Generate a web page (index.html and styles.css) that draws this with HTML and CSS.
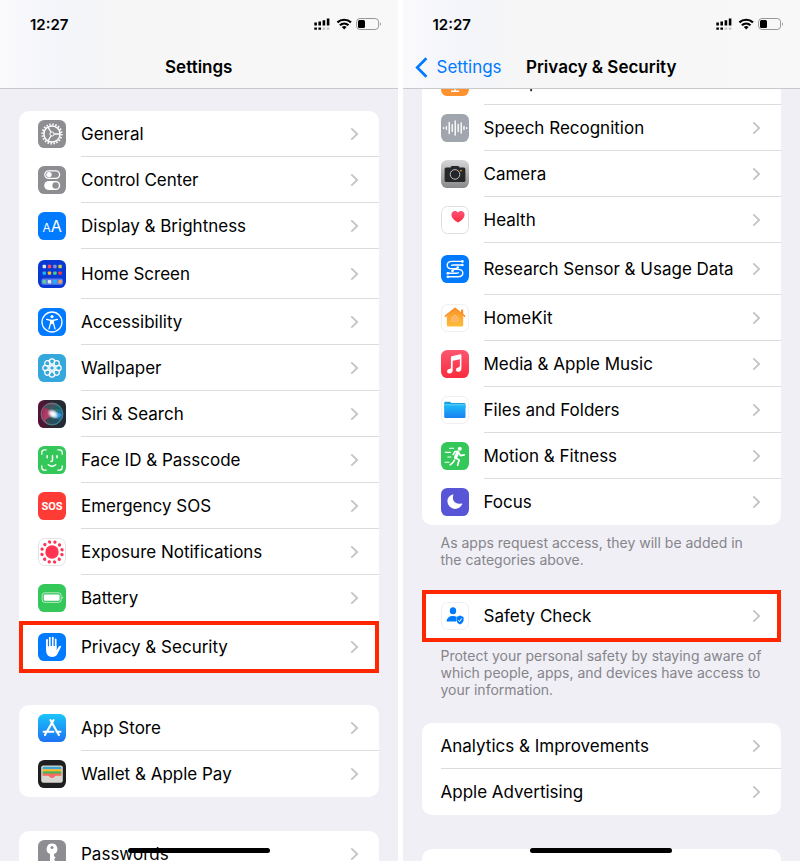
FILE: index.html
```html
<!DOCTYPE html>
<html lang="en">

<head>
    <meta charset="UTF-8">
    <meta name="viewport" content="width=device-width, initial-scale=1.0">
    <title>Settings - Privacy &amp; Security</title>
    <link rel="stylesheet" href="styles.css">
</head>

<body>
    <!-- Shared shapes -->
    <svg class="defs" width="0" height="0" aria-hidden="true">
        <defs>
            <linearGradient id="store-bg" x1="0" y1="0" x2="0" y2="1">
                <stop offset="0" stop-color="#1ac4fb"/><stop offset="1" stop-color="#1d72f2"/>
            </linearGradient>
            <linearGradient id="camera-bg" x1="0" y1="0" x2="0" y2="1">
                <stop offset="0" stop-color="#d6d6d8"/><stop offset="1" stop-color="#88888b"/>
            </linearGradient>
            <linearGradient id="music-bg" x1="0" y1="0" x2="0" y2="1">
                <stop offset="0" stop-color="#fb5770"/><stop offset="1" stop-color="#fa2b3c"/>
            </linearGradient>
            <linearGradient id="folder-bg" x1="0" y1="0" x2="0" y2="1">
                <stop offset="0" stop-color="#1fb9fb"/><stop offset="1" stop-color="#1a80f1"/>
            </linearGradient>
            <linearGradient id="heart-bg" x1="0" y1="0" x2="0" y2="1">
                <stop offset="0" stop-color="#fd5279"/><stop offset="1" stop-color="#fb2c3f"/>
            </linearGradient>
            <linearGradient id="home-bg" x1="0" y1="0" x2="0" y2="1">
                <stop offset="0" stop-color="#fb9426"/><stop offset="1" stop-color="#fdbc3c"/>
            </linearGradient>
            <linearGradient id="siri-bg" x1="0" y1="0" x2="1" y2="0">
                <stop offset="0" stop-color="#5c0f33"/><stop offset=".5" stop-color="#2a2832"/><stop offset="1" stop-color="#1f2a33"/>
            </linearGradient>
            <linearGradient id="siri-orb" x1="0" y1=".3" x2="1" y2=".7">
                <stop offset="0" stop-color="#b02c5c"/><stop offset=".4" stop-color="#d0507c"/><stop offset=".6" stop-color="#2b8b93"/><stop offset="1" stop-color="#1c78b8"/>
            </linearGradient>
            <radialGradient id="siri-glow">
                <stop offset="0" stop-color="#fff"/><stop offset=".4" stop-color="#fff" stop-opacity=".85"/><stop offset="1" stop-color="#fff" stop-opacity="0"/>
            </radialGradient>
        </defs>
        <symbol id="chevron" viewBox="0 0 9 14">
            <path d="M1.3 1.3 7.2 7l-5.9 5.7" fill="none" stroke="#c4c4c7" stroke-width="1.8"/>
        </symbol>
        <symbol id="status" viewBox="0 0 68 14">
            <path d="M1.6 5.4v3.2M5.7 4.6v4M9.9 3.2v5.4M14.1 1.4v7.2M1.6 10.4v2.4M5.7 10.4v2.4" fill="none" stroke="#000" stroke-width="2.6"/>
            <path d="M9.9 10.4v2.4M14.1 10.4v2.4" stroke="#c6c6c8" stroke-width="2.6"/>
            <path d="M23.4 5.3a10.3 10.3 0 0 1 13.6 0M25.9 8.2a6.4 6.4 0 0 1 8.6 0" fill="none" stroke="#000" stroke-width="2.2"/>
            <path d="M27.8 10.1a3.6 3.6 0 0 1 4.8 0l-2.4 2.5z"/>
            <rect x="42.6" y="1.5" width="22" height="11" rx="3.4" fill="none" stroke="#98989a"/>
            <rect x="44" y="3" width="7" height="8" rx="1.5"/>
            <path d="M66 5.2q2 1.8 0 3.6z" fill="#98989a"/>
        </symbol>
    </svg>

    <main class="screens">
        <section class="screen">
            <header class="top-bar">
                <div class="status-bar">
                    <span class="time">12:27</span>
                    <svg class="status-icons"><use href="#status"/></svg>
                </div>
                <div class="nav-bar">
                    <h1 class="title">Settings</h1>
                </div>
            </header>

            <div class="content">
                <nav class="card">
                    <a class="row" href="#general">
                        <svg class="icon" viewBox="0 0 28 28">
                            <rect width="28" height="28" rx="6.4" fill="#8e8e92"/>
                            <g fill="none" stroke="#fff">
                                <circle cx="14" cy="14" r="9.6" stroke-width="2" stroke-dasharray="1.5 1.515"/>
                                <circle cx="14" cy="14" r="8.1" stroke-width="1.5"/>
                                <path d="M16 14h6M13 12.3l-3-5.2M13 15.7l-3 5.2" stroke-width="1.3"/>
                                <circle cx="14" cy="14" r="2.1" stroke-width="1"/>
                            </g>
                        </svg>
                        <span class="label">General<svg class="chevron"><use href="#chevron"/></svg></span>
                    </a>
                    <a class="row" href="#control-center">
                        <svg class="icon" viewBox="0 0 28 28">
                            <rect width="28" height="28" rx="6.4" fill="#8e8e92"/>
                            <rect x="6.8" y="4.8" width="14.8" height="7.6" rx="3.8" fill="none" stroke="#fff" stroke-width="1.3"/>
                            <circle cx="11" cy="8.6" r="2.7" fill="#fff"/>
                            <rect x="6.2" y="15" width="16" height="9" rx="4.5" fill="#fff"/>
                            <circle cx="17.6" cy="19.5" r="3.2" fill="#8e8e92"/>
                        </svg>
                        <span class="label">Control Center<svg class="chevron"><use href="#chevron"/></svg></span>
                    </a>
                    <a class="row" href="#display">
                        <svg class="icon" viewBox="0 0 28 28">
                            <rect width="28" height="28" rx="6.4" fill="#007aff"/>
                            <text class="glyph-text" x="4.6" y="19.8" font-size="12">A</text>
                            <text class="glyph-text" x="12.8" y="19.8" font-size="16">A</text>
                        </svg>
                        <span class="label">Display &amp; Brightness<svg class="chevron"><use href="#chevron"/></svg></span>
                    </a>
                    <a class="row row-medium" href="#home-screen">
                        <svg class="icon" viewBox="0 0 28 28">
                            <rect width="28" height="28" rx="6.4" fill="#0a38d2"/>
                            <rect x="3.4" y="18.6" width="21.6" height="6.2" rx="1.8" fill="#5c80e8"/>
                            <g fill="#e4e6ee">
                                <rect x="4.6" y="4.8" width="3.4" height="3.4" rx=".8"/>
                                <rect x="9.8" y="4.8" width="3.4" height="3.4" rx=".8" fill="#fc4a58"/>
                                <rect x="15.2" y="4.8" width="3.4" height="3.4" rx=".8" fill="#8c90cc"/>
                                <rect x="20.4" y="4.8" width="3.4" height="3.4" rx=".8" fill="#c3d24a"/>
                                <rect x="4.6" y="11.4" width="3.4" height="3.4" rx=".8" fill="#1fb4ee"/>
                                <rect x="9.8" y="11.4" width="3.4" height="3.4" rx=".8" fill="#fdb62c"/>
                                <rect x="15.2" y="11.4" width="3.4" height="3.4" rx=".8" fill="#4fc996"/>
                                <rect x="20.4" y="11.4" width="3.4" height="3.4" rx=".8" fill="#f43c45"/>
                                <rect x="4.6" y="20" width="3.4" height="3.4" rx=".8" fill="#5cd292"/>
                                <rect x="9.8" y="20" width="3.4" height="3.4" rx=".8"/>
                                <rect x="15.2" y="20" width="3.4" height="3.4" rx=".8" fill="#20b3fb"/>
                                <rect x="20.4" y="20" width="3.4" height="3.4" rx=".8" fill="#f89a4a"/>
                            </g>
                        </svg>
                        <span class="label">Home Screen<svg class="chevron"><use href="#chevron"/></svg></span>
                    </a>
                    <a class="row" href="#accessibility">
                        <svg class="icon" viewBox="0 0 28 28">
                            <rect width="28" height="28" rx="6.4" fill="#007aff"/>
                            <circle cx="14" cy="14" r="10" fill="none" stroke="#fff" stroke-width="1.3"/>
                            <circle cx="14" cy="8.6" r="1.6" fill="#fff"/>
                            <path d="M8.6 11.3 12.6 12.3V15L11 20.8M19.4 11.3 15.4 12.3V15L17 20.8" fill="none" stroke="#fff" stroke-width="1.3" stroke-linecap="round"/>
                            <path d="M12 11.7h4v4.5l-1 .4-1-1-1 1-1-.4z" fill="#fff"/>
                        </svg>
                        <span class="label">Accessibility<svg class="chevron"><use href="#chevron"/></svg></span>
                    </a>
                    <a class="row" href="#wallpaper">
                        <svg class="icon" viewBox="0 0 28 28">
                            <rect width="28" height="28" rx="6.4" fill="#34a8dc"/>
                            <g fill="none" stroke="#fff" stroke-width="1.2">
                                <circle cx="14" cy="14" r="2.3"/>
                                <circle cx="20.5" cy="14" r="2.7"/>
                                <circle cx="18.6" cy="18.6" r="2.7"/>
                                <circle cx="14" cy="20.5" r="2.7"/>
                                <circle cx="9.4" cy="18.6" r="2.7"/>
                                <circle cx="7.5" cy="14" r="2.7"/>
                                <circle cx="9.4" cy="9.4" r="2.7"/>
                                <circle cx="14" cy="7.5" r="2.7"/>
                                <circle cx="18.6" cy="9.4" r="2.7"/>
                                <path d="M16.5 14h1.5M15.7 15.7l1.2 1.2M14 16.5V18M12.3 15.7l-1.2 1.2M11.5 14H10M12.3 12.3l-1.2-1.2M14 11.5V10M15.7 12.3l1.2-1.2"/>
                            </g>
                        </svg>
                        <span class="label">Wallpaper<svg class="chevron"><use href="#chevron"/></svg></span>
                    </a>
                    <a class="row" href="#siri">
                        <svg class="icon" viewBox="0 0 28 28">
                            <rect width="28" height="28" rx="6.4" fill="url(#siri-bg)"/>
                            <circle cx="14" cy="14" r="11" fill="url(#siri-orb)" fill-opacity=".8" stroke="#56898f" stroke-width=".8"/>
                            <path d="M6 8C10 2.6 19 3 23.4 10 18 8 15 9 14 13 12 10 9 8 6 8z" fill="#145c5a" opacity=".7"/>
                            <path d="M7 20q5-5 10-2 3 2 5 1-3 5-8 5t-7-4z" fill="#26454f" opacity=".8"/>
                            <path d="M13 14q6-4 11 1-5 6-11-1z" fill="#3d9ff0" opacity=".8"/>
                            <ellipse cx="15" cy="14" rx="6.4" ry="4.6" transform="rotate(35 15 14)" fill="url(#siri-glow)"/>
                        </svg>
                        <span class="label">Siri &amp; Search<svg class="chevron"><use href="#chevron"/></svg></span>
                    </a>
                    <a class="row" href="#face-id">
                        <svg class="icon" viewBox="0 0 28 28">
                            <rect width="28" height="28" rx="6.4" fill="#34c759"/>
                            <g fill="none" stroke="#fff" stroke-width="1.3" stroke-linecap="round">
                                <path d="M3.8 8.2V6.6q0-2.8 2.8-2.8h1.6M19.8 3.8h1.6q2.8 0 2.8 2.8v1.6M24.2 19.8v1.6q0 2.8-2.8 2.8h-1.6M8.2 24.2H6.6q-2.8 0-2.8-2.8v-1.6"/>
                                <path d="M9.2 9.8v2M19 9.8v2M14.5 9.8v4.6q0 1.1-1.7 1M10.3 18.8q3.8 3.2 7.4 0" stroke-width="1.5"/>
                            </g>
                        </svg>
                        <span class="label">Face ID &amp; Passcode<svg class="chevron"><use href="#chevron"/></svg></span>
                    </a>
                    <a class="row" href="#sos">
                        <svg class="icon" viewBox="0 0 28 28">
                            <rect width="28" height="28" rx="6.4" fill="#ff3b36"/>
                            <text class="sos-text" x="14" y="18" text-anchor="middle">SOS</text>
                        </svg>
                        <span class="label">Emergency SOS<svg class="chevron"><use href="#chevron"/></svg></span>
                    </a>
                    <a class="row" href="#exposure">
                        <svg class="icon" viewBox="0 0 28 28">
                            <rect x=".5" y=".5" width="27" height="27" rx="6" fill="#fff" stroke="#e4e4e7"/>
                            <circle cx="14" cy="14" r="6.7" fill="#ff3352"/>
                            <circle cx="14" cy="14" r="10.3" fill="none" stroke="#ff3352" stroke-width="3.3" stroke-linecap="round" stroke-dasharray="0 5.393" transform="rotate(15 14 14)"/>
                        </svg>
                        <span class="label">Exposure Notifications<svg class="chevron"><use href="#chevron"/></svg></span>
                    </a>
                    <a class="row" href="#battery">
                        <svg class="icon" viewBox="0 0 28 28">
                            <rect width="28" height="28" rx="6.4" fill="#34c759"/>
                            <rect x="4.2" y="8.8" width="19" height="9.6" rx="2.6" fill="none" stroke="#fff" stroke-width=".8" stroke-opacity=".8"/>
                            <rect x="5.8" y="10.4" width="15.8" height="6.4" rx="1.2" fill="#fff"/>
                            <path d="M24.5 12.2q1.6 1.4 0 2.8z" fill="#fff"/>
                        </svg>
                        <span class="label">Battery<svg class="chevron"><use href="#chevron"/></svg></span>
                    </a>
                    <a class="row row-tall highlight" href="#privacy">
                        <svg class="icon" viewBox="0 0 28 28">
                            <rect width="28" height="28" rx="6.4" fill="#007aff"/>
                            <path d="M9 7v9M11.8 5v9M14.8 4.8v9M17.6 6.4v9" stroke="#fff" stroke-width="1.9" stroke-linecap="round"/>
                            <path d="M8.1 13h10.4v4.2l2.4-3.8q1-1.2 2-.5.4.4-.2 1.6l-3.4 6.7q-1.5 2.7-5.2 2.7-6 0-6-6.3z" fill="#fff"/>
                            <path d="M10.4 7.5v6M13.3 6v7M16.2 6.5v6.6" stroke="#007aff" stroke-width=".8"/>
                        </svg>
                        <span class="label">Privacy &amp; Security<svg class="chevron"><use href="#chevron"/></svg></span>
                    </a>
                </nav>

                <nav class="card">
                    <a class="row" href="#app-store">
                        <svg class="icon" viewBox="0 0 28 28">
                            <rect width="28" height="28" rx="6.4" fill="url(#store-bg)"/>
                            <path d="M12.5 6.2 20.9 21M15.5 6.2 8.8 17.8M7.8 19.6 7 21M5.6 17.8h9.8M18.6 17.8h3.8" fill="none" stroke="#fff" stroke-width="2.1" stroke-linecap="round"/>
                        </svg>
                        <span class="label">App Store<svg class="chevron"><use href="#chevron"/></svg></span>
                    </a>
                    <a class="row" href="#wallet">
                        <svg class="icon" viewBox="0 0 28 28">
                            <rect width="28" height="28" rx="6.4" fill="#1f1f21"/>
                            <rect x="3.2" y="5.4" width="21.6" height="17.4" rx="2.2" fill="#d8d6d0"/>
                            <path d="M4.6 8q0-1.3 1.3-1.3h16.2q1.3 0 1.3 1.3v1.5H4.6z" fill="#3fa3d2"/>
                            <path d="M4.6 9.2h18.8V12H4.6z" fill="#fdb92e"/>
                            <path d="M4.6 11.4h18.8v2.8H4.6z" fill="#44b659"/>
                            <path d="M4.6 13.6h18.8v2.2H18q-1 0-1.5 1-1 1.3-2.5 1.3t-2.5-1.3q-.5-1-1.5-1H4.6z" fill="#f96a60"/>
                        </svg>
                        <span class="label">Wallet &amp; Apple Pay<svg class="chevron"><use href="#chevron"/></svg></span>
                    </a>
                </nav>

                <nav class="card">
                    <a class="row" href="#passwords">
                        <svg class="icon" viewBox="0 0 28 28">
                            <rect width="28" height="28" rx="6.4" fill="#8e8e92"/>
                            <path d="M14 3.6a5.4 5.4 0 0 1 2 10.4v2l1.6 1.7-1.6 1.6 1.2 1.7L14 24.4l-2-2V14a5.4 5.4 0 0 1 2-10.4z" fill="#fff"/>
                            <circle cx="14" cy="7.4" r="1.5" fill="#8e8e92"/>
                        </svg>
                        <span class="label">Passwords<svg class="chevron"><use href="#chevron"/></svg></span>
                    </a>
                </nav>
            </div>
            <div class="home-indicator"></div>
        </section>

        <section class="screen">
            <header class="top-bar">
                <div class="status-bar">
                    <span class="time">12:27</span>
                    <svg class="status-icons"><use href="#status"/></svg>
                </div>
                <div class="nav-bar">
                    <a class="back" href="#settings">
                        <svg class="back-arrow" viewBox="0 0 13 21"><path d="M11.4 1.2 2.2 10.5l9.2 9.3" fill="none" stroke="#007aff" stroke-width="2.7"/></svg>
                        Settings
                    </a>
                    <h1 class="title">Privacy &amp; Security</h1>
                </div>
            </header>

            <div class="content scrolled">
                <nav class="card">
                    <a class="row" href="#microphone">
                        <svg class="icon" viewBox="0 0 28 28">
                            <rect width="28" height="28" rx="6.4" fill="#ff9230"/>
                            <rect x="11" y="3.5" width="6" height="12" rx="3" fill="#fff"/>
                            <path d="M8.4 11.5v1.8a5.6 5.6 0 0 0 11.2 0v-1.8M14 19v4M10 23.2h8" fill="none" stroke="#fff" stroke-width="1.4"/>
                        </svg>
                        <span class="label">Microphone<svg class="chevron"><use href="#chevron"/></svg></span>
                    </a>
                    <a class="row" href="#speech">
                        <svg class="icon" viewBox="0 0 28 28">
                            <rect width="28" height="28" rx="6.4" fill="#a1a5ae"/>
                            <path d="M2.6 13.6v.8M5.4 12.8v2.4M8.2 8.4v11.2M11.2 10.6v6.8M14.2 7v14M17.2 10.4v7.2M20.2 9v10M23 12.4v3.2M25.6 13.6v.8" stroke="#fff" stroke-width="1.4" stroke-linecap="round"/>
                        </svg>
                        <span class="label">Speech Recognition<svg class="chevron"><use href="#chevron"/></svg></span>
                    </a>
                    <a class="row" href="#camera">
                        <svg class="icon" viewBox="0 0 28 28">
                            <rect width="28" height="28" rx="6.4" fill="url(#camera-bg)"/>
                            <path d="M5.2 7.6h4.2l1.2-1.5h6.8l1.2 1.5h4.2q1.6 0 1.6 1.6v11.2q0 1.6-1.6 1.6H5.2q-1.6 0-1.6-1.6V9.2q0-1.6 1.6-1.6z" fill="#262729"/>
                            <circle cx="14" cy="14.4" r="4.8" fill="#242527" stroke="#bdbdc0" stroke-width="1"/>
                            <circle cx="20" cy="10.6" r=".9" fill="#f7951d"/>
                        </svg>
                        <span class="label">Camera<svg class="chevron"><use href="#chevron"/></svg></span>
                    </a>
                    <a class="row" href="#health">
                        <svg class="icon" viewBox="0 0 28 28">
                            <rect x=".5" y=".5" width="27" height="27" rx="6" fill="#fff" stroke="#dedee1"/>
                            <path d="M17 16.6C12.6 13.8 10.4 11.6 10.4 8.7c0-3.9 4.6-5 6.6-2.2 2-2.8 6.6-1.7 6.6 2.2 0 2.9-2.2 5.1-6.6 7.9z" fill="url(#heart-bg)"/>
                        </svg>
                        <span class="label">Health<svg class="chevron"><use href="#chevron"/></svg></span>
                    </a>
                    <a class="row row-tall" href="#research">
                        <svg class="icon" viewBox="0 0 28 28">
                            <rect width="28" height="28" rx="6.4" fill="#007aff"/>
                            <g fill="none" stroke="#fff" stroke-width="1.4" stroke-linecap="round">
                                <path d="M21.2 6.4H11q-4.8.2-4.8 3.8 0 3.4 4.6 3.6h3q2.4 0 3-1.4"/>
                                <path d="M21.2 10h-8.6q-2 0-2 .4"/>
                                <path d="M6.8 21.8H17q4.8-.2 4.8-3.8 0-3.4-4.6-3.6h-3q-2.4 0-2.6 1.6"/>
                                <path d="M6.8 18.2h8.6q2 0 2-.4"/>
                            </g>
                            <g fill="#fff">
                                <circle cx="21.4" cy="6.4" r="1.3"/><circle cx="21.4" cy="10" r="1.3"/>
                                <circle cx="6.8" cy="18.2" r="1.3"/><circle cx="6.8" cy="21.8" r="1.3"/>
                                <circle cx="11.4" cy="16" r="1.2"/><circle cx="16.8" cy="12.4" r="1.2"/>
                            </g>
                        </svg>
                        <span class="label">Research Sensor &amp; Usage Data<svg class="chevron"><use href="#chevron"/></svg></span>
                    </a>
                    <a class="row" href="#homekit">
                        <svg class="icon" viewBox="0 0 28 28">
                            <rect x=".5" y=".5" width="27" height="27" rx="6" fill="#fff" stroke="#efeff1"/>
                            <path d="M20 5.6h2.2v5H20z" fill="#f98f27"/>
                            <path d="M14 4.2 22.2 12v9q0 1.6-1.6 1.6H7.4q-1.6 0-1.6-1.6v-9z" fill="url(#home-bg)"/>
                            <path d="m4.4 12.2 9.6-7.9 9.6 7.9" fill="none" stroke="#f98f27" stroke-width="1.6" stroke-linecap="round" stroke-linejoin="round"/>
                            <path d="m14 10.8 3.2 2.7v4.3h-6.4v-4.3z" fill="#fbb369" stroke="#fcc466" stroke-width=".8"/>
                        </svg>
                        <span class="label">HomeKit<svg class="chevron"><use href="#chevron"/></svg></span>
                    </a>
                    <a class="row" href="#media">
                        <svg class="icon" viewBox="0 0 28 28">
                            <rect width="28" height="28" rx="6.4" fill="url(#music-bg)"/>
                            <path d="M10.8 6.2 19.4 4.3q1-.2 1 .8v13.3q0 3-2.9 3.3-2.6.2-2.6-2 0-1.8 2.2-2.3 1.8-.3 1.8-1.3V9.2l-7.2 1.5v9.6q0 2.8-2.8 3.2-2.8.3-2.9-2-.1-1.9 2.2-2.4 1.7-.3 1.7-1.4V7.2q0-.8.9-1z" fill="#fff"/>
                        </svg>
                        <span class="label">Media &amp; Apple Music<svg class="chevron"><use href="#chevron"/></svg></span>
                    </a>
                    <a class="row" href="#files">
                        <svg class="icon" viewBox="0 0 28 28">
                            <rect x=".5" y=".5" width="27" height="27" rx="6" fill="#fff" stroke="#efeff1"/>
                            <path d="M3.2 7q0-1.2 1.2-1.2h4.4q.6 0 1.1.6l.6.6h12.8q1.2 0 1.2 1.2v4H3.2z" fill="#1aa0dc"/>
                            <path d="M3.2 8.2h21.3v2H3.2z" fill="#62d0fc"/>
                            <path d="M3.2 9.2h21.3v11.6q0 1.2-1.2 1.2H4.4q-1.2 0-1.2-1.2z" fill="url(#folder-bg)"/>
                        </svg>
                        <span class="label">Files and Folders<svg class="chevron"><use href="#chevron"/></svg></span>
                    </a>
                    <a class="row" href="#motion">
                        <svg class="icon" viewBox="0 0 28 28">
                            <rect width="28" height="28" rx="6.4" fill="#34c759"/>
                            <circle cx="18.8" cy="6.8" r="2" fill="#fff"/>
                            <g fill="none" stroke="#fff" stroke-linecap="round" stroke-linejoin="round">
                                <path d="M12.2 12.6 13.8 9.6l3-.2M18 11.2l1.6 2.4 3.6-.8M14.2 15.8l4 2.2-1.6 5.2M13.4 18.2 12 20.4 9.2 22.8" stroke-width="1.7"/>
                                <path d="M16.8 10.4 14.6 15.4" stroke-width="3.4"/>
                                <path d="M8.6 6.2h4M4.4 10.4h5M6.8 15h3.2M4 20.2h4" stroke-width="1.1"/>
                            </g>
                        </svg>
                        <span class="label">Motion &amp; Fitness<svg class="chevron"><use href="#chevron"/></svg></span>
                    </a>
                    <a class="row" href="#focus">
                        <svg class="icon" viewBox="0 0 28 28">
                            <rect width="28" height="28" rx="6.4" fill="#5856d6"/>
                            <path d="M11.4 6.6c.7-.4 1.2 0 .9.7-1.8 5.2 2.3 9.6 8 8.2.8-.2 1.2.3.8 1-1.4 2.8-4.1 4.4-7 4.4a7.7 7.7 0 0 1-7.7-7.8c0-2.8 1.7-5.1 5-6.5z" fill="#fff"/>
                        </svg>
                        <span class="label">Focus<svg class="chevron"><use href="#chevron"/></svg></span>
                    </a>
                </nav>
                <p class="note">As apps request access, they will be added in the categories above.</p>

                <nav class="card">
                    <a class="row row-tall highlight" href="#safety-check">
                        <svg class="icon" viewBox="0 0 28 28">
                            <rect x=".5" y=".5" width="27" height="27" rx="6" fill="#fff" stroke="#efeff1"/>
                            <g fill="#007aff">
                                <ellipse cx="12" cy="8.8" rx="3.2" ry="3.5"/>
                                <path d="M5.6 19.4c.2-3.5 2.8-5.4 6.4-5.4 1.6 0 2.9.4 3.9 1.1l-.9.4v3.9z"/>
                                <path d="m19 13.6 3.6 1.5v3.4q-.4 2.6-3.6 3.9-3.2-1.3-3.6-3.9v-3.4z"/>
                            </g>
                            <path d="m17.3 18.2 1.3 1.4 2.2-3.2" fill="none" stroke="#fff"/>
                        </svg>
                        <span class="label">Safety Check<svg class="chevron"><use href="#chevron"/></svg></span>
                    </a>
                </nav>
                <p class="note">Protect your personal safety by staying aware of which people, apps, and devices have access to your information.</p>

                <nav class="card">
                    <a class="row" href="#analytics"><span class="label">Analytics &amp; Improvements<svg class="chevron"><use href="#chevron"/></svg></span></a>
                    <a class="row" href="#advertising"><span class="label">Apple Advertising<svg class="chevron"><use href="#chevron"/></svg></span></a>
                </nav>

                <nav class="card">
                    <a class="row" href="#report"><span class="label"></span></a>
                </nav>
            </div>
            <div class="home-indicator"></div>
        </section>
    </main>
</body>

</html>
```
FILE: styles.css
```css
* {
    box-sizing: border-box;
}

body {
    margin: 0;
    background-color: #fff;
    color: #000;
    font-family: Inter, "Liberation Sans", sans-serif;
    font-size: 17px;
}

a {
    color: inherit;
    text-decoration: none;
}

.defs {
    position: absolute;
}

.screens {
    display: grid;
    grid-template-columns: 1fr 1fr;
    gap: 5px;
    height: 100vh;
}

.screen {
    position: relative;
    min-width: 0;
    overflow: hidden;
    background-color: #f0eff5;
}

/* header */
.top-bar {
    position: relative;
    z-index: 1;
    height: 89px;
    background: linear-gradient(90deg, #fafafc, #f4f5fa 15%, #f6f6f6 30%, #f8f8f8);
    border-bottom: 1px solid #c9c9cc;
}

.status-bar {
    display: flex;
    justify-content: space-between;
    align-items: center;
    height: 48px;
    padding: 0 16px 0 30px;
}

.time {
    font-size: 15px;
    font-weight: 600;
}

.status-icons {
    width: 68px;
    height: 14px;
}

.nav-bar {
    display: grid;
    grid-template-columns: 1fr auto 1fr;
    align-items: center;
    height: 38px;
    padding: 0 12px;
}

.title {
    grid-column: 2;
    margin: 0;
    font-size: 17px;
    font-weight: 600;
}

.back {
    display: flex;
    align-items: center;
    gap: 9px;
    color: #007aff;
}

.back-arrow {
    width: 13px;
    height: 21px;
}

/* lists */
.content {
    display: flex;
    flex-direction: column;
    padding: 22px 19px 0;
}

.scrolled {
    margin-top: -30px;
    padding-top: 0;
}

.card {
    flex-shrink: 0;
    margin-bottom: 34px;
    background-color: #fff;
    border-radius: 10px;
}

.card:has(.highlight) {
    margin-bottom: 32px;
}

.row {
    display: flex;
    align-items: center;
    height: 46px;
    padding-left: 19px;
}

.row-medium {
    height: 50px;
}

.row-tall {
    height: 52px;
}

.icon {
    flex: none;
    width: 28px;
    height: 28px;
    margin-right: 15px;
}

.label {
    flex: 1;
    display: flex;
    align-items: center;
    justify-content: space-between;
    align-self: stretch;
    padding: 1px 20px 0 0;
    border-bottom: 1px solid #dcdcdf;
    white-space: nowrap;
}

.row:last-child .label,
.row:has(+ .highlight) .label {
    border-bottom-color: transparent;
}

.chevron {
    flex: none;
    width: 9px;
    height: 14px;
}

.highlight {
    outline: 4px solid #ff2600;
    outline-offset: -4px;
}

.note {
    margin: -25px 19px 22px;
    color: #85858b;
    font-size: 14px;
    line-height: 17px;
}

.card:has(.highlight) + .note {
    margin: -27px 19px 25px;
}

.glyph-text {
    fill: #fff;
    font-family: Inter, sans-serif;
}

.sos-text {
    fill: #fff;
    font-family: Roboto, sans-serif;
    font-size: 11px;
    font-weight: 700;
}

.home-indicator {
    position: absolute;
    bottom: 8px;
    left: 50%;
    width: 142px;
    height: 5px;
    border-radius: 3px;
    background-color: #000;
    transform: translateX(-50%);
}
```
